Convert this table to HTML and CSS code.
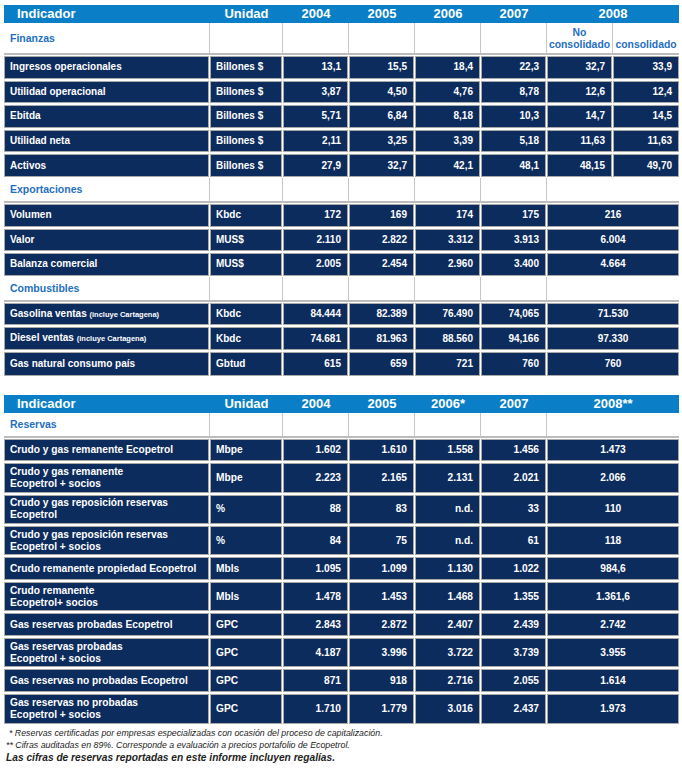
FILE: index.html
```html
<!DOCTYPE html>
<html lang="es">
<head>
<meta charset="utf-8">
<title>Indicadores</title>
<link rel="stylesheet" href="styles.css">
</head>
<body>
<div class="page">
<table class="grid t1">
  <colgroup>
    <col class="c-ind"><col class="c-uni"><col class="c-y"><col class="c-y"><col class="c-y"><col class="c-y"><col class="c-y"><col class="c-y">
  </colgroup>
  <tr class="head">
    <th class="h-ind">Indicador</th><th>Unidad</th><th>2004</th><th>2005</th><th>2006</th><th>2007</th><th colspan="2">2008</th>
  </tr>
  <tr class="sec tall">
    <td>Finanzas</td><td></td><td></td><td></td><td></td><td></td><td class="sub">No<br>consolidado</td><td class="sub">consolidado</td>
  </tr>
  <tr class="row"><td>Ingresos operacionales</td><td>Billones $</td><td>13,1</td><td>15,5</td><td>18,4</td><td>22,3</td><td>32,7</td><td>33,9</td></tr>
  <tr class="row"><td>Utilidad operacional</td><td>Billones $</td><td>3,87</td><td>4,50</td><td>4,76</td><td>8,78</td><td>12,6</td><td>12,4</td></tr>
  <tr class="row"><td>Ebitda</td><td>Billones $</td><td>5,71</td><td>6,84</td><td>8,18</td><td>10,3</td><td>14,7</td><td>14,5</td></tr>
  <tr class="row"><td>Utilidad neta</td><td>Billones $</td><td>2,11</td><td>3,25</td><td>3,39</td><td>5,18</td><td>11,63</td><td>11,63</td></tr>
  <tr class="row"><td>Activos</td><td>Billones $</td><td>27,9</td><td>32,7</td><td>42,1</td><td>48,1</td><td>48,15</td><td>49,70</td></tr>
  <tr class="sec"><td>Exportaciones</td><td></td><td></td><td></td><td></td><td></td><td colspan="2"></td></tr>
  <tr class="row"><td>Volumen</td><td>Kbdc</td><td>172</td><td>169</td><td>174</td><td>175</td><td colspan="2" class="mid">216</td></tr>
  <tr class="row"><td>Valor</td><td>MUS$</td><td>2.110</td><td>2.822</td><td>3.312</td><td>3.913</td><td colspan="2" class="mid">6.004</td></tr>
  <tr class="row"><td>Balanza comercial</td><td>MUS$</td><td>2.005</td><td>2.454</td><td>2.960</td><td>3.400</td><td colspan="2" class="mid">4.664</td></tr>
  <tr class="sec"><td>Combustibles</td><td></td><td></td><td></td><td></td><td></td><td colspan="2"></td></tr>
  <tr class="row"><td>Gasolina ventas <span class="small">(incluye Cartagena)</span></td><td>Kbdc</td><td>84.444</td><td>82.389</td><td>76.490</td><td>74,065</td><td colspan="2" class="mid">71.530</td></tr>
  <tr class="row"><td>Diesel ventas <span class="small">(incluye Cartagena)</span></td><td>Kbdc</td><td>74.681</td><td>81.963</td><td>88.560</td><td>94,166</td><td colspan="2" class="mid">97.330</td></tr>
  <tr class="row"><td>Gas natural consumo país</td><td>Gbtud</td><td>615</td><td>659</td><td>721</td><td>760</td><td colspan="2" class="mid">760</td></tr>
</table>

<table class="grid t2">
  <colgroup>
    <col class="c-ind"><col class="c-uni"><col class="c-y"><col class="c-y"><col class="c-y"><col class="c-y"><col class="c-y"><col class="c-y">
  </colgroup>
  <tr class="head">
    <th class="h-ind">Indicador</th><th>Unidad</th><th>2004</th><th>2005</th><th>2006*</th><th>2007</th><th colspan="2">2008**</th>
  </tr>
  <tr class="sec"><td>Reservas</td><td></td><td></td><td></td><td></td><td></td><td colspan="2"></td></tr>
  <tr class="row"><td>Crudo y gas remanente Ecopetrol</td><td>Mbpe</td><td>1.602</td><td>1.610</td><td>1.558</td><td>1.456</td><td colspan="2" class="mid">1.473</td></tr>
  <tr class="row two"><td>Crudo y gas remanente<br>Ecopetrol + socios</td><td>Mbpe</td><td>2.223</td><td>2.165</td><td>2.131</td><td>2.021</td><td colspan="2" class="mid">2.066</td></tr>
  <tr class="row two"><td>Crudo y gas reposición reservas<br>Ecopetrol</td><td>%</td><td>88</td><td>83</td><td>n.d.</td><td>33</td><td colspan="2" class="mid">110</td></tr>
  <tr class="row two"><td>Crudo y gas reposición reservas<br>Ecopetrol + socios</td><td>%</td><td>84</td><td>75</td><td>n.d.</td><td>61</td><td colspan="2" class="mid">118</td></tr>
  <tr class="row"><td>Crudo remanente propiedad Ecopetrol</td><td>Mbls</td><td>1.095</td><td>1.099</td><td>1.130</td><td>1.022</td><td colspan="2" class="mid">984,6</td></tr>
  <tr class="row two"><td>Crudo remanente<br>Ecopetrol+ socios</td><td>Mbls</td><td>1.478</td><td>1.453</td><td>1.468</td><td>1.355</td><td colspan="2" class="mid">1.361,6</td></tr>
  <tr class="row"><td>Gas reservas probadas Ecopetrol</td><td>GPC</td><td>2.843</td><td>2.872</td><td>2.407</td><td>2.439</td><td colspan="2" class="mid">2.742</td></tr>
  <tr class="row two"><td>Gas reservas probadas<br>Ecopetrol + socios</td><td>GPC</td><td>4.187</td><td>3.996</td><td>3.722</td><td>3.739</td><td colspan="2" class="mid">3.955</td></tr>
  <tr class="row"><td>Gas reservas no probadas Ecopetrol</td><td>GPC</td><td>871</td><td>918</td><td>2.716</td><td>2.055</td><td colspan="2" class="mid">1.614</td></tr>
  <tr class="row two"><td>Gas reservas no probadas<br>Ecopetrol + socios</td><td>GPC</td><td>1.710</td><td>1.779</td><td>3.016</td><td>2.437</td><td colspan="2" class="mid">1.973</td></tr>
</table>

<div class="notes">
  <p class="n1">* Reservas certificadas por empresas especializadas con ocasión del proceso de capitalización.</p>
  <p class="n2">** Cifras auditadas en 89%. Corresponde a evaluación a precios portafolio de Ecopetrol.</p>
  <p class="n3">Las cifras de reservas reportadas en este informe incluyen regalías.</p>
</div>
</div>
</body>
</html>
```

FILE: styles.css
```css
html, body {
  margin: 0;
  padding: 0;
  background: #ffffff;
}

.page {
  padding: 5px 0 0 4px;
  font-family: "Liberation Sans", Arial, sans-serif;
}

.grid {
  table-layout: fixed;
  border-collapse: separate;
  border-spacing: 0;
  width: 675px;
}

.c-ind { width: 206px; }
.c-uni { width: 73px; }
.c-y { width: 66px; }

.grid th,
.grid td {
  padding: 0;
  box-sizing: border-box;
}

.head th {
  background: #0a7fc7;
  color: #ffffff;
  font-size: 13px;
  font-weight: bold;
  height: 18px;
  line-height: 18px;
  text-align: center;
}

.head th.h-ind {
  text-align: left;
  padding-left: 13px;
}

.sec td {
  background: #ffffff;
  height: 25px;
  border-right: 1px solid #c6c6c6;
  border-bottom: 2px solid #bcbcbc;
  vertical-align: middle;
}

.sec td:first-child {
  color: #1f6fc0;
  font-weight: bold;
  font-size: 10.5px;
  padding-left: 6px;
}

.sec td:last-child {
  border-right: 0;
}

.sec.tall td {
  height: 32px;
}

.sec td.sub {
  color: #1f6fc0;
  font-weight: bold;
  font-size: 10.4px;
  line-height: 12px;
  text-align: center;
  vertical-align: bottom;
  padding-bottom: 2px;
}

.row td {
  background: #0d2c5e;
  color: #ffffff;
  font-weight: bold;
  font-size: 10px;
  height: 24.6px;
  line-height: 12px;
  border-top: 1px solid #ffffff;
  border-bottom: 1px solid #ffffff;
  border-right: 1px solid #ffffff;
  box-shadow: inset 0 0 0 1px #a9a9a9;
  text-align: right;
  padding-right: 7px;
  vertical-align: middle;
}

.row td:first-child {
  text-align: left;
  padding-left: 6px;
  padding-right: 0;
}

.row td:nth-child(2) {
  text-align: left;
  padding-left: 6px;
  padding-right: 0;
}

.row td:last-child {
  border-right: 0;
}

.row td.mid {
  text-align: center;
  padding-right: 0;
}

.row:last-child td {
  border-bottom: 0;
}

.small {
  font-size: 7.5px;
}

.t2 {
  margin-top: 19px;
}

.t2 .row td {
  font-size: 10.2px;
  height: 24.6px;
}

.t2 .row.two td {
  height: 31.4px;
}

.notes {
  color: #222222;
  padding-top: 3px;
}

.notes p {
  margin: 0;
}

.n1, .n2 {
  font-size: 8.8px;
  font-style: italic;
  line-height: 12px;
}

.n1 { padding-left: 5px; }
.n2 { padding-left: 2px; }

.n3 {
  font-size: 10.2px;
  font-weight: bold;
  font-style: italic;
  line-height: 14px;
  padding-left: 2px;
}
```
